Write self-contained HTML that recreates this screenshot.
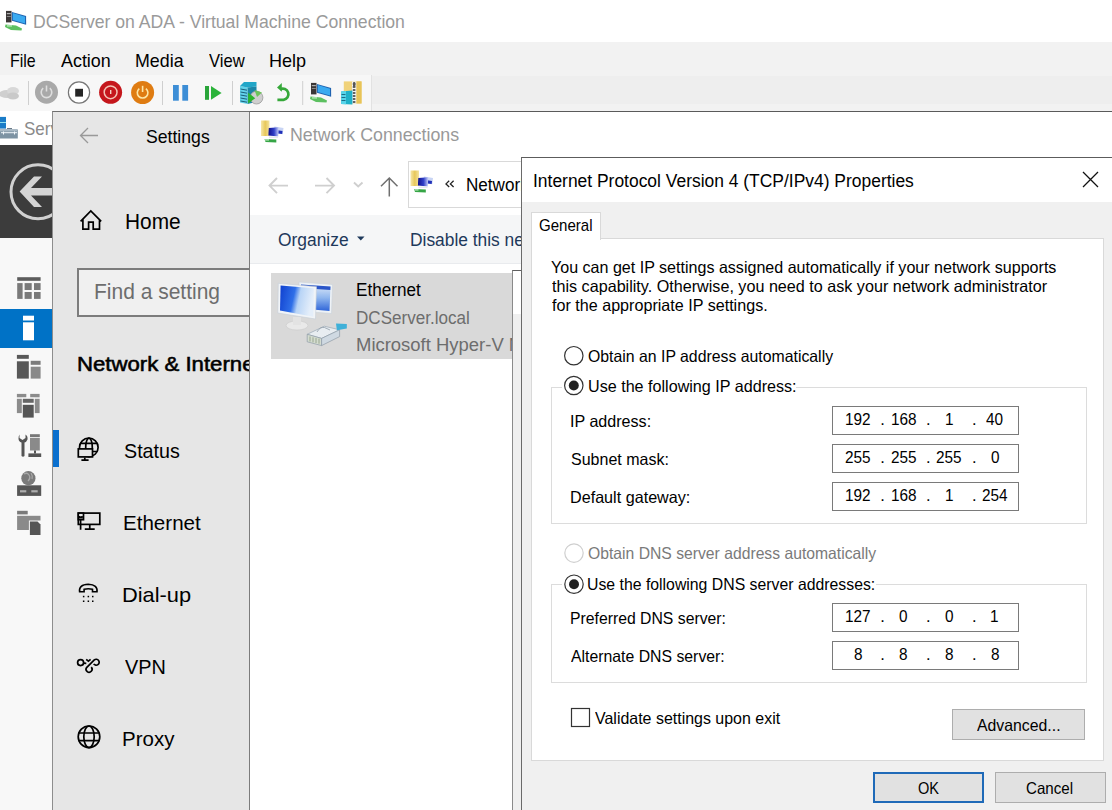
<!DOCTYPE html>
<html><head><meta charset="utf-8">
<style>
html,body{margin:0;padding:0}
body{width:1112px;height:810px;overflow:hidden;position:relative;background:#fff;font-family:"Liberation Sans",sans-serif}
.a{position:absolute}
.t{position:absolute;white-space:nowrap;line-height:1;transform-origin:0 0;font-family:"Liberation Sans",sans-serif}
svg{position:absolute;overflow:visible}
</style></head><body>
<!-- title bar -->
<div class="a" style="left:0;top:0;width:1112px;height:42px;background:#fff"></div>
<svg style="left:0;top:0" width="40" height="40">
<defs><g id="vmicon">
  <rect x="6" y="10.9" width="5.5" height="11.5" fill="#3a3636"/>
  <rect x="6.8" y="13" width="4" height="1.2" fill="#b0b0b0"/>
  <rect x="6.8" y="16" width="4" height="1" fill="#888"/>
  <polygon points="11.9,11.9 26.1,16.1 26.1,24.8 11.9,20.8" fill="#1f63b0"/>
  <polygon points="12.8,13 25,16.8 25,23.5 12.8,20" fill="#3aaaf0"/>
  <polygon points="5.5,24.5 16,25.5 22,28.5 21.5,30.5 11,30 5,27" fill="#5cc060"/>
  <rect x="7" y="25.3" width="5" height="1.2" fill="#c8f0c8"/>
</g></defs><use href="#vmicon"/>
</svg>
<!-- menu bar -->
<div class="a" style="left:0;top:42px;width:1112px;height:69px;background:#f2f2f2"></div>
<div class="a" style="left:0;top:76px;width:1112px;height:28px;background:#eeeeee"></div>
<!-- toolbar -->
<div class="a" style="left:0;top:75px;width:371px;height:36px;background:#f7f7f7;border-right:1px solid #e2e2e2"></div>
<div class="t" style="left:33.32px;top:13px;font-size:18.6px;color:#9a9a9a;transform:scaleX(0.9478);">DCServer on ADA - Virtual Machine Connection</div>
<div class="t" style="left:10.20px;top:53px;font-size:17.73px;color:#000;transform:scaleX(0.9012);">File</div>
<div class="t" style="left:61.20px;top:53px;font-size:17.73px;color:#000;transform:scaleX(1.0107);">Action</div>
<div class="t" style="left:134.61px;top:53px;font-size:17.73px;color:#000;transform:scaleX(1.0060);">Media</div>
<div class="t" style="left:208.60px;top:53px;font-size:17.73px;color:#000;transform:scaleX(0.9367);">View</div>
<div class="t" style="left:268.59px;top:53px;font-size:17.73px;color:#000;transform:scaleX(1.0186);">Help</div>
<svg style="left:0;top:0" width="380" height="112">
  <!-- ctrl alt del -->
  <ellipse cx="7" cy="94" rx="8" ry="4" fill="#cfcfcf"/>
  <ellipse cx="13" cy="91" rx="6" ry="4" fill="#d8d8d8"/>
  <ellipse cx="13" cy="96" rx="6" ry="3.5" fill="#c9c9c9"/>
  <line x1="28.5" y1="81" x2="28.5" y2="105" stroke="#cfcfcf" stroke-width="1"/>
  <!-- grey power -->
  <circle cx="46.5" cy="92.2" r="11.5" fill="#a9a9a9"/>
  <path d="M43.2,88.2 A5.3,5.3 0 1 0 49.8,88.2" fill="none" stroke="#dedede" stroke-width="1.6"/>
  <line x1="46.5" y1="85.5" x2="46.5" y2="91.5" stroke="#dedede" stroke-width="1.6"/>
  <!-- stop -->
  <circle cx="79" cy="92.5" r="10.6" fill="#fff" stroke="#777" stroke-width="1.2"/>
  <rect x="75.2" y="88.8" width="7.8" height="7.8" fill="#262626"/>
  <!-- red -->
  <circle cx="110.6" cy="92.3" r="11.5" fill="#c5171c"/>
  <circle cx="110.6" cy="92.3" r="6.4" fill="none" stroke="#f3c3b5" stroke-width="1.5"/>
  <rect x="110" y="90" width="1.4" height="4" fill="#f3d3c5"/>
  <!-- orange -->
  <circle cx="142.6" cy="92.5" r="11.5" fill="#df7c12"/>
  <path d="M139.3,88.6 A5.3,5.3 0 1 0 145.9,88.6" fill="none" stroke="#fde7a6" stroke-width="1.6"/>
  <line x1="142.6" y1="85.8" x2="142.6" y2="92" stroke="#fde7a6" stroke-width="1.6"/>
  <line x1="162.5" y1="81" x2="162.5" y2="105" stroke="#cfcfcf" stroke-width="1"/>
  <!-- pause -->
  <rect x="173" y="85" width="5.8" height="15.7" fill="#3d8ed6"/>
  <rect x="182.3" y="85" width="5.8" height="15.7" fill="#3d8ed6"/>
  <!-- play -->
  <rect x="205" y="86" width="4" height="13.8" fill="#2aa53a"/>
  <polygon points="211,86 221.6,93 211,99.8" fill="#2bb33a"/>
  <line x1="232.5" y1="81" x2="232.5" y2="105" stroke="#cfcfcf" stroke-width="1"/>
  <!-- checkpoint -->
  <polygon points="240,86 247.6,87.5 247.6,104 240,102.5" fill="#62d2ea"/>
  <polygon points="240,86 244,82 256.5,82 256.5,86.5 247.6,87.5" fill="#22a6c8"/>
  <polygon points="247.6,87.5 256.5,86.5 256.5,102 247.6,104" fill="#1b86a8"/>
  <path d="M240.5,89 L247,90.2 M240.5,92 L247,93.2 M240.5,95 L247,96.2 M240.5,98 L247,99.2 M240.5,101 L247,102.2" stroke="#1a5f7a" stroke-width="1"/>
  <circle cx="256.5" cy="97.6" r="6.4" fill="#cfcfcf" stroke="#9a9a9a" stroke-width="0.8"/>
  <polygon points="254.5,90 262,92.5 257,97" fill="#6cc45a"/>
  <polygon points="248.1,92.6 255.2,98.3 248.1,103.6" fill="#2cb52c"/>
  <!-- revert -->
  <path d="M280.2,89.3 A5.6,5.6 0 1 1 283.5,99.8 H277.4" fill="none" stroke="#36a83a" stroke-width="2.7"/>
  <polygon points="277,87.4 281.8,83 281.8,91.8" fill="#36a83a"/>
  <line x1="302.7" y1="81" x2="302.7" y2="105" stroke="#cfcfcf" stroke-width="1"/>
  <!-- network -->
  <use href="#vmicon" x="305" y="72"/>
  <!-- zip/server -->
  <rect x="343.8" y="81.4" width="17.8" height="22.1" fill="#f0d27a"/>
  <rect x="356.5" y="81.4" width="5" height="22.1" fill="#e8c458"/>
  <rect x="352" y="81.4" width="4.2" height="22.1" fill="#f4f4f4"/>
  <path d="M352.8,84 h2.6 M352.8,87 h2.6 M352.8,90 h2.6 M352.8,93 h2.6 M352.8,96 h2.6 M352.8,99 h2.6 M352.8,102 h2.6" stroke="#333" stroke-width="1.4"/>
  <rect x="353" y="82" width="2.4" height="5" rx="1" fill="#555"/>
  <polygon points="341.1,91.5 352.4,90.6 352.4,104.6 341.1,104" fill="#1fb0c8"/>
  <polygon points="341.1,91.5 346,91 346,104.2 341.1,104" fill="#58d4ea"/>
  <path d="M341.5,94.5 h4 M341.5,97.5 h4 M341.5,100.5 h4" stroke="#1a6d88" stroke-width="1"/>
</svg>

<!-- VM area -->
<div class="a" style="left:0;top:111px;width:52px;height:699px;background:#f8f8f8"></div>
<div class="a" style="left:0;top:111px;width:52px;height:34px;background:#fff"></div>
<svg style="left:0;top:0" width="52" height="810">
  <rect x="0" y="116.9" width="6" height="11.7" fill="#1a7cc8"/>
  <rect x="0" y="122" width="6" height="1" fill="#8fe0f0"/>
  <rect x="7" y="128" width="5" height="1" fill="#6a7a88"/>
  <rect x="0" y="129.4" width="17.8" height="9.1" fill="#7d93a3"/>
  <rect x="0" y="129.4" width="17" height="2" fill="#a8b8c4"/>
  <rect x="1" y="132.2" width="16" height="1" fill="#f0f6fa"/>
  <rect x="3" y="131.5" width="1" height="3" fill="#f0f6fa"/>
  <rect x="14" y="131.5" width="1" height="3" fill="#f0f6fa"/>
</svg>
<div class="t" style="left:24.07px;top:121px;font-size:17.9px;color:#8a8a8a;transform:scaleX(0.9500);">Server Manager</div>
<div class="a" style="left:0;top:145px;width:52px;height:93px;background:#3c3c3c"></div>
<svg style="left:0;top:0" width="52" height="810">
  <circle cx="38" cy="191.8" r="27" fill="none" stroke="#d0d0d0" stroke-width="3"/>
  <polygon points="19.6,191.5 34,176.5 42,176.5 31,188 60,188 60,195.5 31,195.5 42,207 34,207" fill="#d4d4d4"/>
  <!-- sidebar icons -->
  <rect x="17.2" y="277.2" width="23.4" height="3.6" fill="#5c5c5c"/>
  <g fill="#7a7a7a">
    <rect x="17.2" y="283.1" width="5.4" height="15.8"/>
    <rect x="24.6" y="283.1" width="7.1" height="6.9"/><rect x="34" y="283.1" width="6.6" height="6.9"/>
    <rect x="24.6" y="292" width="7.1" height="6.9"/><rect x="34" y="292" width="6.6" height="6.9"/>
  </g>
  <rect x="0" y="309" width="52" height="39" fill="#0072c6"/>
  <rect x="23" y="315.7" width="11" height="4.8" fill="#fff"/>
  <rect x="23" y="322.3" width="11" height="18" fill="#fff"/>
  <rect x="16.9" y="354.9" width="11.9" height="3.9" fill="#585858"/>
  <rect x="16.9" y="361.3" width="11.9" height="17.3" fill="#585858"/>
  <rect x="30.7" y="360.8" width="9.9" height="4" fill="#7c7c7c"/>
  <rect x="30.7" y="366.7" width="9.9" height="11.9" fill="#8a8a8a"/>
  <g fill="#8c8c8c">
    <rect x="16.9" y="393.9" width="9.4" height="3.4"/><rect x="16.9" y="398.8" width="9.4" height="14.3"/>
    <rect x="30.2" y="393.9" width="9.4" height="3.4"/><rect x="30.2" y="398.8" width="9.4" height="14.3"/>
  </g>
  <rect x="21.8" y="397.8" width="13" height="21" fill="#f8f8f8"/>
  <rect x="22.8" y="398.8" width="10.9" height="4" fill="#666"/>
  <rect x="22.8" y="404.8" width="10.9" height="12.8" fill="#555"/>
  <!-- tools -->
  <path d="M19.5,434.5 V438 L22.5,440 L25.5,438 V434.5 Q28,436 27.5,439.5 Q26.5,442 24.5,442.5 V456 Q23,457.5 21.5,456 V442.5 Q18.5,441.5 18.5,438.5 Q18.5,436 19.5,434.5Z" fill="#555"/>
  <rect x="30" y="434.2" width="9.8" height="2.8" fill="#777"/>
  <rect x="30" y="437.8" width="9.8" height="12.7" fill="#8a8a8a"/>
  <rect x="34" y="450.5" width="2" height="3" fill="#555"/>
  <rect x="28.4" y="453.4" width="12.8" height="3.6" fill="#555"/>
  <!-- globe server -->
  <circle cx="28.4" cy="478.2" r="7.1" fill="#7a7a7a"/>
  <path d="M24,474 Q27,472 29,475 Q31,478 28,481 M31,473 Q33,476 32,479" stroke="#a8a8a8" stroke-width="1.3" fill="none"/>
  <rect x="17.1" y="485.3" width="24.1" height="10.6" fill="#565656"/>
  <rect x="20" y="490.2" width="6.3" height="2.2" fill="#adadad"/>
  <rect x="31.3" y="490.2" width="6.4" height="2.2" fill="#adadad"/>
  <!-- folder doc -->
  <rect x="17.1" y="510.8" width="10.6" height="3.6" fill="#7a7a7a"/>
  <rect x="17.1" y="515.8" width="23.4" height="14.2" fill="#8a8a8a"/>
  <rect x="28.9" y="520.5" width="12.6" height="15.5" fill="#f8f8f8"/>
  <path d="M29.9,521.5 H37.5 L40.5,524.5 V535 H29.9Z" fill="#555"/>
</svg>

<!-- Settings window -->
<div class="a" style="left:52px;top:111px;width:196px;height:699px;background:#e6e6e6;border-left:1px solid #8d8d8d;border-top:1px solid #6f6f6f"></div>
<div class="a" style="left:53px;top:430px;width:6px;height:37px;background:#0a6fce"></div>
<div class="a" style="left:77px;top:268px;width:180px;height:45px;background:#f0f0f0;border:2px solid #7c7c7c;border-right:none"></div>
<svg style="left:0;top:0" width="250" height="810">
  <g fill="none" stroke="#999" stroke-width="1.3">
    <path d="M80.5,135.5 H98 M88,128 L80.5,135.5 L88,143"/>
  </g>
  <g fill="none" stroke="#000" stroke-width="1.7">
    <path d="M80.6,221.3 L90.8,211 L101.2,221.3 M82.9,219 V229.1 H88.6 V222.2 H93.2 V229.1 H99.5 V219"/>
    <!-- status -->
    <circle cx="88.8" cy="447.4" r="9.3"/>
    <ellipse cx="89" cy="447.4" rx="3.3" ry="9.3"/>
    <path d="M80,443.3 H97.6 M80,451.5 H97.6"/>
    <rect x="78.3" y="448.9" width="14.2" height="8" fill="#e6e6e6"/>
    <path d="M84.8,457.5 V460 M81.4,460.2 H88.6"/>
    <!-- ethernet -->
    <rect x="78.3" y="513.1" width="21.5" height="11.3"/>
    <rect x="78.3" y="513.1" width="5.2" height="6.6" fill="#e6e6e6"/>
    <path d="M80.6,519.8 V529.8 M89.75,525 V529.2 M84.8,529.2 H94.7 M79.8,516 V517.6 H82 V516"/>
    <!-- dial up -->
    <path d="M79.6,591.8 Q78.5,584.6 88.3,584.3 Q98,584.6 97,591.8 H92.5 V589.3 Q88.3,588.3 84.1,589.3 V591.8 Z" stroke-width="1.6"/>
    <!-- vpn -->
    <circle cx="80.6" cy="662.6" r="3"/>
    <path d="M93.7,663.9 A3,3 0 1 0 94.3,659.9 L86.6,667.6 A3,3 0 1 0 91.2,667.2 M83.5,663.2 L86.3,663.3 M86.2,659.4 L88.4,661.2 L90.6,659.4"/>
    <!-- proxy -->
    <circle cx="89" cy="736.8" r="10.8"/>
    <ellipse cx="89" cy="736.8" rx="5.2" ry="10.8"/>
    <path d="M78.5,733 H99.5 M78.5,740.6 H99.5"/>
  </g>
  <g fill="#000">
    <rect x="82.9" y="595.8" width="1.5" height="1.5"/><rect x="87.6" y="595.8" width="1.5" height="1.5"/><rect x="92" y="595.8" width="1.5" height="1.5"/>
    <rect x="82.9" y="600.5" width="1.5" height="1.5"/><rect x="87.6" y="600.5" width="1.5" height="1.5"/><rect x="92" y="600.5" width="1.5" height="1.5"/>
  </g>
</svg>
<div class="t" style="left:146.35px;top:127px;font-size:19.0px;color:#000;transform:scaleX(0.9279);">Settings</div>
<div class="t" style="left:125.37px;top:211px;font-size:21.9px;color:#000;transform:scaleX(0.9531);">Home</div>
<div class="t" style="left:94.36px;top:281px;font-size:22.0px;color:#6d6d6d;transform:scaleX(0.9541);">Find a setting</div>
<div class="t" style="left:76.67px;top:354px;font-size:20.35px;color:#000;transform:scaleX(1.0900);-webkit-text-stroke:0.55px #000;">Network &amp; Internet</div>
<div class="t" style="left:124.38px;top:441px;font-size:20.9px;color:#000;transform:scaleX(0.9423);">Status</div>
<div class="t" style="left:122.59px;top:513px;font-size:20.9px;color:#000;transform:scaleX(0.9839);">Ethernet</div>
<div class="t" style="left:122.10px;top:585px;font-size:20.9px;color:#000;transform:scaleX(1.0435);">Dial-up</div>
<div class="t" style="left:125.30px;top:657px;font-size:20.9px;color:#000;transform:scaleX(0.9499);">VPN</div>
<div class="t" style="left:122.20px;top:729px;font-size:20.9px;color:#000;transform:scaleX(0.9809);">Proxy</div>

<!-- Network Connections window -->
<div class="a" style="left:249px;top:111px;width:863px;height:699px;background:#fff;border-left:1px solid #7c7c7c;border-top:1px solid #5a5a5a"></div>
<div class="a" style="left:250px;top:215px;width:862px;height:48px;background:#f5f6f7;border-bottom:1px solid #e9ebee"></div>
<div class="a" style="left:408px;top:161px;width:700px;height:45px;border:1px solid #d9d9d9;background:#fff"></div>
<div class="a" style="left:271px;top:273px;width:260px;height:86px;background:#d9d9d9"></div>
<svg style="left:0;top:0" width="520" height="810">
  <!-- title icon -->
  <defs>
    <linearGradient id="fold" x1="0" y1="0" x2="1" y2="0"><stop offset="0" stop-color="#f6e7a8"/><stop offset="0.5" stop-color="#e8c85a"/><stop offset="1" stop-color="#f3e3a0"/></linearGradient>
    <linearGradient id="mon" x1="0" y1="0" x2="1" y2="0"><stop offset="0" stop-color="#10108a"/><stop offset="0.55" stop-color="#3040c8"/><stop offset="1" stop-color="#c8d0f8"/></linearGradient>
    <g id="ncicon">
      <rect x="261" y="120.5" width="8.5" height="15.5" fill="url(#fold)"/>
      <polygon points="274.4,126.5 283.5,127.9 282.7,134.2 274.4,133" fill="#c8d4f4"/>
      <polygon points="276,130 282.5,131 282.2,134 276,133.2" fill="#2030b8"/>
      <polygon points="268.8,127.9 278.7,127.3 278.3,136.6 268.4,135.4" fill="url(#mon)"/>
      <rect x="269" y="136.5" width="9" height="1.5" fill="#e8e8f0"/>
      <polygon points="264.5,139 276.3,139.5 276.3,142.5 265.5,142" fill="#36a546"/>
      <rect x="265" y="139.3" width="4" height="1.2" fill="#c8f0c8"/>
    </g>
  </defs>
  <use href="#ncicon"/>
  <use href="#ncicon" x="149.5" y="50"/>
  <!-- nav -->
  <g fill="none" stroke="#cfcfcf" stroke-width="1.9">
    <path d="M269.5,185.6 H288 M277,178 L269.5,185.6 L277,193.2"/>
    <path d="M315,185.6 H334 M326.5,178 L334,185.6 L326.5,193.2"/>
    <path d="M354,182.5 L358.2,186.5 L362.5,182.5"/>
  </g>
  <path d="M389.3,196.5 V178 M381,186.3 L389.3,178 L397.5,186.3" fill="none" stroke="#707070" stroke-width="1.5"/>
  <path d="M449.2,180.8 L446,183.9 L449.2,187 M453.6,180.8 L450.4,183.9 L453.6,187" fill="none" stroke="#222" stroke-width="1.3"/>
  <!-- organize arrow -->
  <polygon points="357,236.5 364.5,236.5 360.75,240.5" fill="#1e395b"/>
  <!-- ethernet icon -->
  <defs>
    <linearGradient id="scr1" x1="0" y1="0" x2="1" y2="0.2">
      <stop offset="0" stop-color="#0f3fcf"/><stop offset="0.45" stop-color="#2f6fe8"/><stop offset="0.62" stop-color="#b8d4f6"/><stop offset="1" stop-color="#e4eefa"/>
    </linearGradient>
    <linearGradient id="scr2" x1="0" y1="0" x2="0" y2="1">
      <stop offset="0" stop-color="#dfeaf8"/><stop offset="0.5" stop-color="#8fb6ee"/><stop offset="1" stop-color="#2f65d8"/>
    </linearGradient>
  </defs>
  <polygon points="299,282 332.5,284.5 331.5,313.5 299,311" fill="#eef2f6" stroke="#c9d1da" stroke-width="0.6"/>
  <polygon points="301,284.5 330.5,286.5 329.5,311 301,308.5" fill="url(#scr2)"/>
  <polygon points="301,284.5 330.5,286.5 330.3,290 301,288" fill="#2a55c8"/>
  <ellipse cx="297" cy="325.5" rx="11" ry="4.6" fill="#e9e9e9" stroke="#cfcfcf" stroke-width="0.8"/>
  <rect x="293" y="317" width="8" height="8" fill="#e3e3e3"/>
  <polygon points="278.3,283.3 316.5,286.7 315.5,319 277.8,313" fill="#f1f4f7" stroke="#c5cdd6" stroke-width="0.6"/>
  <polygon points="280.6,285.6 313.9,288.3 313.3,316.7 280,310.6" fill="url(#scr1)"/>
  <polygon points="307.2,334.3 324.3,326.2 339.6,329.8 321.6,338.4" fill="#e8edf1" stroke="#9aa8b4" stroke-width="0.7"/>
  <polygon points="307.2,334.3 321.6,338.4 321.6,345.6 307.2,341.8" fill="#d4dcd0" stroke="#8f9ca8" stroke-width="0.7"/>
  <polygon points="321.6,338.4 339.6,329.8 339.6,336.6 321.6,345.6" fill="#cfd9e2" stroke="#8f9ca8" stroke-width="0.7"/>
  <path d="M317,332 Q320,326.5 324.5,327.5 L330,330" fill="none" stroke="#8f9ca8" stroke-width="0.8"/>
  <polygon points="336,323.5 346.8,324 346.8,328.5 336.9,330.3" fill="#3fb0d8"/>
  <path d="M310,336.5 V341.5 M313,337.3 V342.3 M316,338 V343 M319,338.7 V343.7" stroke="#8a9a80" stroke-width="0.8"/>
</svg>
<div class="t" style="left:290.36px;top:126px;font-size:18.2px;color:#999;transform:scaleX(0.9781);">Network Connections</div>
<div class="t" style="left:465.56px;top:176px;font-size:18.8px;color:#000;transform:scaleX(0.9100);">Network Connections</div>
<div class="t" style="left:278.38px;top:231px;font-size:18.3px;color:#1e395b;transform:scaleX(0.9511);">Organize</div>
<div class="t" style="left:409.84px;top:231px;font-size:18.3px;color:#1e395b;transform:scaleX(0.9500);">Disable this network device</div>
<div class="t" style="left:356.46px;top:282px;font-size:17.6px;color:#000;transform:scaleX(0.9737);">Ethernet</div>
<div class="t" style="left:356.47px;top:309px;font-size:18.3px;color:#6d6d6d;transform:scaleX(0.9330);">DCServer.local</div>
<div class="t" style="left:356.36px;top:337px;font-size:17.6px;color:#6d6d6d;transform:scaleX(1.0492);">Microsoft Hyper-V Network Adapter</div>

<!-- window behind dialog -->
<div class="a" style="left:512px;top:270px;width:600px;height:540px;background:#efefef;border-left:1px solid #8a8a8a;border-top:1px solid #5f5f5f"></div>
<div class="a" style="left:513px;top:271px;width:9px;height:43px;background:#fff"></div>

<!-- Dialog -->
<div class="a" style="left:521px;top:157px;width:591px;height:653px;background:#f0f0f0;border-left:1px solid #6a6a6a;border-top:1px solid #5c5c5c"></div>
<div class="a" style="left:522px;top:158px;width:590px;height:44px;background:#fff"></div>
<svg style="left:0;top:0" width="1112" height="810">
  <path d="M1083,172 L1098,187 M1098,172 L1083,187" stroke="#111" stroke-width="1.3"/>
</svg>
<div class="a" style="left:531px;top:238px;width:571px;height:521px;background:#fff;border:1px solid #d9d9d9"></div>
<div class="a" style="left:531px;top:212px;width:68px;height:27px;background:#fff;border:1px solid #d9d9d9;border-bottom:none"></div>
<!-- group boxes -->
<div class="a" style="left:551px;top:387px;width:534px;height:135px;border:1px solid #dcdcdc"></div>
<div class="a" style="left:551px;top:584px;width:534px;height:97px;border:1px solid #dcdcdc"></div>
<div class="a" style="left:562px;top:376px;width:234px;height:22px;background:#fff"></div>
<div class="a" style="left:562px;top:573px;width:314px;height:22px;background:#fff"></div>
<!-- radios -->
<svg style="left:0;top:0" width="1112" height="810">
  <circle cx="573.8" cy="355.7" r="9.2" fill="#fff" stroke="#333" stroke-width="1.2"/>
  <circle cx="573.8" cy="385.5" r="9.2" fill="#fff" stroke="#333" stroke-width="1.2"/>
  <circle cx="573.8" cy="385.5" r="5" fill="#222"/>
  <circle cx="574" cy="553.1" r="9.2" fill="#fff" stroke="#cfcfcf" stroke-width="1.2"/>
  <circle cx="574" cy="584.2" r="9.2" fill="#fff" stroke="#333" stroke-width="1.2"/>
  <circle cx="574" cy="584.2" r="5" fill="#222"/>
  <rect x="571.5" y="708.5" width="18" height="18" fill="#fff" stroke="#333" stroke-width="1.2"/>
</svg>
<!-- IP fields -->
<div class="a" style="left:832px;top:406px;width:185px;height:27px;border:1px solid #7a7a7a;background:#fff"></div>
<div class="a" style="left:832px;top:444px;width:185px;height:27px;border:1px solid #7a7a7a;background:#fff"></div>
<div class="a" style="left:832px;top:482px;width:185px;height:27px;border:1px solid #7a7a7a;background:#fff"></div>
<div class="a" style="left:832px;top:603px;width:185px;height:27px;border:1px solid #7a7a7a;background:#fff"></div>
<div class="a" style="left:832px;top:641px;width:185px;height:27px;border:1px solid #7a7a7a;background:#fff"></div>
<!-- buttons -->
<div class="a" style="left:952px;top:709px;width:131px;height:29px;background:#e1e1e1;border:1px solid #adadad"></div>
<div class="a" style="left:873px;top:772px;width:107px;height:27px;background:#e1e1e1;border:2px solid #1f6ab8"></div>
<div class="a" style="left:995px;top:772px;width:109px;height:29px;background:#e1e1e1;border:1px solid #adadad"></div>
<div class="t" style="left:533.34px;top:172px;font-size:18.0px;color:#000;transform:scaleX(0.9686);">Internet Protocol Version 4 (TCP/IPv4) Properties</div>
<div class="t" style="left:539.29px;top:218px;font-size:16.6px;color:#000;transform:scaleX(0.9076);">General</div>
<div class="t" style="left:550.85px;top:259px;font-size:16.5px;color:#000;transform:scaleX(0.9735);">You can get IP settings assigned automatically if your network supports</div>
<div class="t" style="left:551.50px;top:278px;font-size:16.5px;color:#000;transform:scaleX(0.9786);">this capability. Otherwise, you need to ask your network administrator</div>
<div class="t" style="left:551.50px;top:297px;font-size:16.5px;color:#000;transform:scaleX(0.9770);">for the appropriate IP settings.</div>
<div class="t" style="left:588.06px;top:348px;font-size:16.5px;color:#000;transform:scaleX(0.9588);">Obtain an IP address automatically</div>
<div class="t" style="left:587.59px;top:378px;font-size:16.5px;color:#000;transform:scaleX(0.9774);">Use the following IP address:</div>
<div class="t" style="left:569.84px;top:413px;font-size:16.5px;color:#000;transform:scaleX(0.9755);">IP address:</div>
<div class="t" style="left:570.60px;top:451px;font-size:16.5px;color:#000;transform:scaleX(0.9699);">Subnet mask:</div>
<div class="t" style="left:569.84px;top:489px;font-size:16.5px;color:#000;transform:scaleX(0.9790);">Default gateway:</div>
<div class="t" style="left:587.66px;top:545px;font-size:16.5px;color:#7a7a7a;transform:scaleX(0.9521);">Obtain DNS server address automatically</div>
<div class="t" style="left:587.41px;top:576px;font-size:16.5px;color:#000;transform:scaleX(0.9582);">Use the following DNS server addresses:</div>
<div class="t" style="left:570.17px;top:610px;font-size:16.5px;color:#000;transform:scaleX(0.9555);">Preferred DNS server:</div>
<div class="t" style="left:571.40px;top:648px;font-size:16.5px;color:#000;transform:scaleX(0.9580);">Alternate DNS server:</div>
<div class="t" style="left:595.20px;top:710px;font-size:16.5px;color:#000;transform:scaleX(0.9673);">Validate settings upon exit</div>
<div class="t" style="left:976.90px;top:717px;font-size:16.5px;color:#000;transform:scaleX(0.9586);">Advanced...</div>
<div class="t" style="left:918.32px;top:780px;font-size:16.5px;color:#000;transform:scaleX(0.8825);">OK</div>
<div class="t" style="left:1026.49px;top:780px;font-size:16.5px;color:#000;transform:scaleX(0.9172);">Cancel</div>
<div class="t" style="left:845.13px;top:411px;font-size:16.5px;color:#000;transform:scaleX(0.9300);">192</div>
<div class="t" style="left:890.53px;top:411px;font-size:16.5px;color:#000;transform:scaleX(0.9300);">168</div>
<div class="t" style="left:944.86px;top:411px;font-size:16.5px;color:#000;transform:scaleX(0.9300);">1</div>
<div class="t" style="left:986.44px;top:411px;font-size:16.5px;color:#000;transform:scaleX(0.9300);">40</div>
<div class="t" style="left:880.31px;top:411px;font-size:16.5px;color:#000;">.</div>
<div class="t" style="left:926.01px;top:411px;font-size:16.5px;color:#000;">.</div>
<div class="t" style="left:972.01px;top:411px;font-size:16.5px;color:#000;">.</div>
<div class="t" style="left:845.25px;top:449px;font-size:16.5px;color:#000;transform:scaleX(0.9300);">255</div>
<div class="t" style="left:890.65px;top:449px;font-size:16.5px;color:#000;transform:scaleX(0.9300);">255</div>
<div class="t" style="left:936.45px;top:449px;font-size:16.5px;color:#000;transform:scaleX(0.9300);">255</div>
<div class="t" style="left:990.58px;top:449px;font-size:16.5px;color:#000;transform:scaleX(0.9300);">0</div>
<div class="t" style="left:880.31px;top:449px;font-size:16.5px;color:#000;">.</div>
<div class="t" style="left:926.01px;top:449px;font-size:16.5px;color:#000;">.</div>
<div class="t" style="left:972.01px;top:449px;font-size:16.5px;color:#000;">.</div>
<div class="t" style="left:845.13px;top:487px;font-size:16.5px;color:#000;transform:scaleX(0.9300);">192</div>
<div class="t" style="left:890.53px;top:487px;font-size:16.5px;color:#000;transform:scaleX(0.9300);">168</div>
<div class="t" style="left:944.86px;top:487px;font-size:16.5px;color:#000;transform:scaleX(0.9300);">1</div>
<div class="t" style="left:981.93px;top:487px;font-size:16.5px;color:#000;transform:scaleX(0.9300);">254</div>
<div class="t" style="left:880.31px;top:487px;font-size:16.5px;color:#000;">.</div>
<div class="t" style="left:926.01px;top:487px;font-size:16.5px;color:#000;">.</div>
<div class="t" style="left:972.01px;top:487px;font-size:16.5px;color:#000;">.</div>
<div class="t" style="left:845.13px;top:608px;font-size:16.5px;color:#000;transform:scaleX(0.9300);">127</div>
<div class="t" style="left:899.18px;top:608px;font-size:16.5px;color:#000;transform:scaleX(0.9300);">0</div>
<div class="t" style="left:944.98px;top:608px;font-size:16.5px;color:#000;transform:scaleX(0.9300);">0</div>
<div class="t" style="left:990.46px;top:608px;font-size:16.5px;color:#000;transform:scaleX(0.9300);">1</div>
<div class="t" style="left:880.31px;top:608px;font-size:16.5px;color:#000;">.</div>
<div class="t" style="left:926.01px;top:608px;font-size:16.5px;color:#000;">.</div>
<div class="t" style="left:972.01px;top:608px;font-size:16.5px;color:#000;">.</div>
<div class="t" style="left:853.90px;top:646px;font-size:16.5px;color:#000;transform:scaleX(0.9300);">8</div>
<div class="t" style="left:899.30px;top:646px;font-size:16.5px;color:#000;transform:scaleX(0.9300);">8</div>
<div class="t" style="left:945.10px;top:646px;font-size:16.5px;color:#000;transform:scaleX(0.9300);">8</div>
<div class="t" style="left:990.70px;top:646px;font-size:16.5px;color:#000;transform:scaleX(0.9300);">8</div>
<div class="t" style="left:880.31px;top:646px;font-size:16.5px;color:#000;">.</div>
<div class="t" style="left:926.01px;top:646px;font-size:16.5px;color:#000;">.</div>
<div class="t" style="left:972.01px;top:646px;font-size:16.5px;color:#000;">.</div>
</body></html>
